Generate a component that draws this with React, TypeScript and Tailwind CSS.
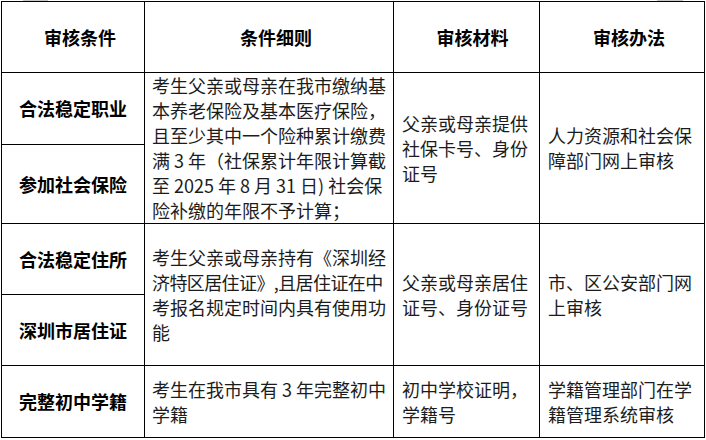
import React from "react";

const font = { fontFamily: '"Noto Sans CJK SC", "Noto Sans", sans-serif' };

function Lines({ lines }: { lines: React.ReactNode[] }) {
  return (
    <div className="leading-[25px] whitespace-nowrap">
      {lines.map((l, i) => (
        <div key={i}>{l}</div>
      ))}
    </div>
  );
}

const cell = "border-r border-b border-black flex items-center";

export default function App() {
  return (
    <div className="relative w-[706px] h-[440px] bg-white text-[18px] text-[#1c1c1c]" style={font}>
      <div className="absolute left-[23px] top-0 h-[1px] w-[25px] bg-[#c8c8c8]" />
      <div className="absolute left-[657px] top-0 h-[1px] w-[26px] bg-[#c8c8c8]" />
      <div className="pt-[1px] pl-[1px]">
        <div className="grid grid-cols-[143px_249px_146px_165px] grid-rows-[71px_72px_79px_71px_71px_72px] w-[704px] border-l border-t border-black">
          {/* header */}
          <div className={`${cell} justify-center pl-[14px] font-bold text-black`}>审核条件</div>
          <div className={`${cell} justify-center pl-[14px] font-bold text-black`}>条件细则</div>
          <div className={`${cell} justify-center pl-[12px] font-bold text-black`}>审核材料</div>
          <div className={`${cell} justify-center pl-[14px] font-bold text-black`}>审核办法</div>

          {/* rows 1-2 */}
          <div className={`${cell} justify-center font-bold text-black`}>合法稳定职业</div>
          <div className={`${cell} row-span-2 px-[7px]`}>
            <Lines
              lines={[
                "考生父亲或母亲在我市缴纳基",
                "本养老保险及基本医疗保险，",
                "且至少其中一个险种累计缴费",
                "满 3 年（社保累计年限计算截",
                "至 2025 年 8 月 31 日) 社会保",
                "险补缴的年限不予计算；",
              ]}
            />
          </div>
          <div className={`${cell} row-span-2 px-[8px]`}>
            <Lines lines={["父亲或母亲提供", "社保卡号、身份", "证号"]} />
          </div>
          <div className={`${cell} row-span-2 px-[8px]`}>
            <Lines lines={["人力资源和社会保", "障部门网上审核"]} />
          </div>
          <div className={`${cell} justify-center font-bold text-black`}>参加社会保险</div>

          {/* rows 3-4 */}
          <div className={`${cell} justify-center font-bold text-black`}>合法稳定住所</div>
          <div className={`${cell} row-span-2 px-[7px]`}>
            <Lines
              lines={[
                "考生父亲或母亲持有《深圳经",
                <span className="tracking-[-0.6px]">济特区居住证》,且居住证在中</span>,
                "考报名规定时间内具有使用功",
                "能",
              ]}
            />
          </div>
          <div className={`${cell} row-span-2 px-[8px]`}>
            <Lines lines={["父亲或母亲居住", "证号、身份证号"]} />
          </div>
          <div className={`${cell} row-span-2 px-[8px]`}>
            <Lines lines={["市、区公安部门网", "上审核"]} />
          </div>
          <div className={`${cell} justify-center font-bold text-black`}>深圳市居住证</div>

          {/* row 5 */}
          <div className={`${cell} justify-center font-bold text-black`}>完整初中学籍</div>
          <div className={`${cell} px-[7px]`}>
            <Lines lines={["考生在我市具有 3 年完整初中", "学籍"]} />
          </div>
          <div className={`${cell} px-[8px]`}>
            <Lines lines={["初中学校证明，", "学籍号"]} />
          </div>
          <div className={`${cell} px-[8px]`}>
            <Lines lines={["学籍管理部门在学", "籍管理系统审核"]} />
          </div>
        </div>
      </div>
    </div>
  );
}
